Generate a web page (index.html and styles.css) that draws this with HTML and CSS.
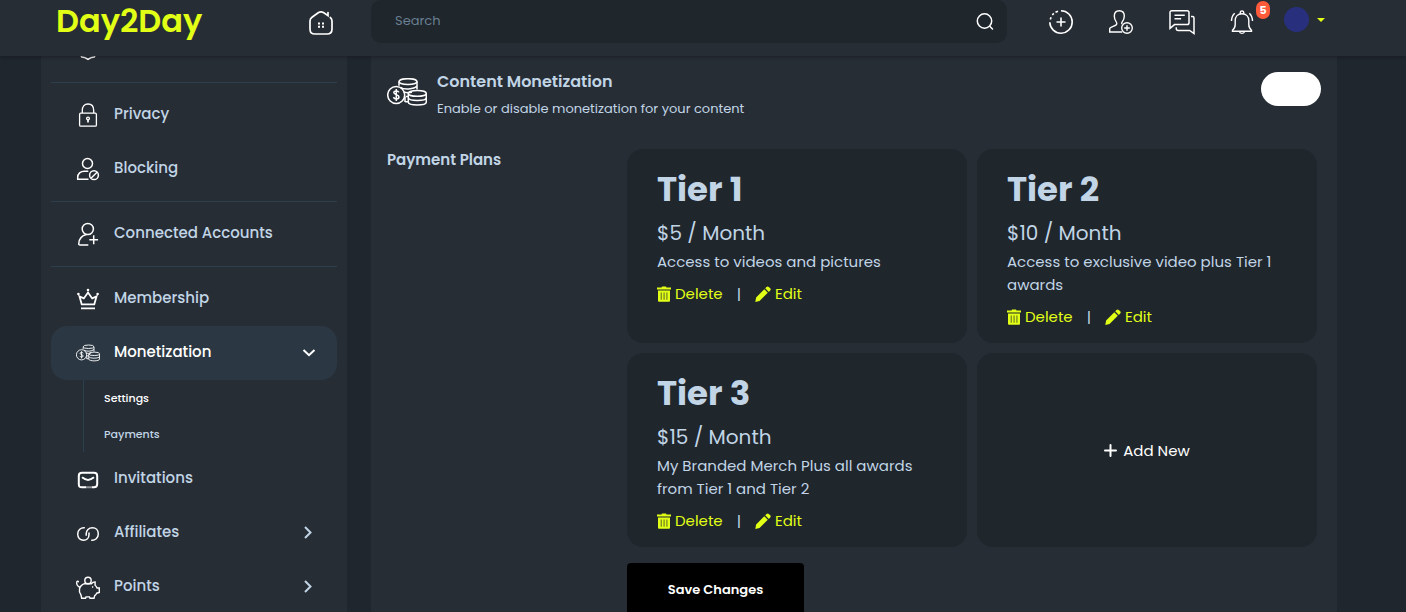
FILE: index.html
```html
<!DOCTYPE html>
<html lang="en">
<head>
<meta charset="utf-8">
<meta name="viewport" content="width=device-width, initial-scale=1">
<title>Day2Day</title>
<link rel="stylesheet" href="styles.css">
</head>
<body>
<svg class="defs" aria-hidden="true">
  <symbol id="coins" viewBox="0 0 40 28">
    <g fill="none" stroke="currentColor">
      <ellipse cx="21" cy="3.6" rx="9" ry="2.9"/>
      <path d="M12 3.6v4.2M30 3.600v8M13.500 9.300c3 2.600 13.500 2.200 16.500-1.200M16.500 14c3 .8 6 .8 8.500.3M18.500 18.600h2.500M18 23.500c1 .3 2 .4 3 .3M18 19v5"/>
      <circle cx="9.200" cy="17" r="8.500"/>
      <path d="M11.800 14.400c-.4-2-5-2-5 .2 0 2.600 5.200 1.600 5.200 4.400 0 2.500-5 2.500-5.400.2M9.300 11v12"/>
      <ellipse cx="30.300" cy="15.400" rx="9" ry="2.900"/>
      <path d="M21.300 15.400v8.700c0 4 18 4 18 0v-8.700M21.300 19.600c0 4 18 4 18 0"/>
    </g>
  </symbol>
  <symbol id="trash" viewBox="0 0 14 16">
    <path fill="currentColor" fill-rule="evenodd" d="M4.500 1.500 5 .5h4l.5 1H14v2H0v-2zM1 4.500h12v10c0 .8-.5 1.300-1.200 1.300H2.200c-.7 0-1.200-.5-1.200-1.300zm2.800 2v7.200h.7V6.500zm2.900 0v7.200h.7V6.500zm2.900 0v7.200h.7V6.500z"/>
  </symbol>
  <symbol id="pencil" viewBox="0 0 16 16">
    <path fill="currentColor" d="m9.300 3.200 3.500 3.500-8.300 8.300L.3 15.900l.8-4.400zM10.200 2.300l1.300-1.400c.7-.7 1.600-.7 2.300 0l1.400 1.400c.7.700.7 1.600 0 2.300l-1.400 1.300z"/>
  </symbol>
</svg>

<header class="topbar">
  <div class="brand">
    <a class="logo" href="#">Day2Day</a>
    <a class="icon-link home" href="#" aria-label="Home">
      <svg class="icon" viewBox="0 0 24 24" fill="none" stroke="currentColor" stroke-width="1.700" stroke-linecap="round">
        <path d="M21.300 7.500c1.200 1 1.700 2 1.700 3.500v8c0 3.500-1.500 5-5 5H6c-3.500 0-5-1.500-5-5v-8c0-1.700.6-2.700 2-3.700l6.200-4.500c1.800-1.200 3.800-1.200 5.600 0L19 5.700V2.500"/>
        <path stroke-linecap="butt" stroke-width="2" d="M9 13.500h2M13 13.500h2M9 16.800h2M13 16.800h2"/>
      </svg>
    </a>
  </div>
  <form class="search" role="search">
    <input class="search-input" type="search" placeholder="Search" aria-label="Search">
    <button class="search-button" type="button" aria-label="Search">
      <svg class="search-icon" viewBox="0 0 18 18" fill="none" stroke="currentColor" stroke-width="1.500" stroke-linecap="round"><circle cx="8.500" cy="8" r="7.200"/><path d="m14 13.500 2.500 2.500"/></svg>
    </button>
  </form>
  <nav class="actions" aria-label="Account">
    <button class="icon-link" type="button" aria-label="Create">
      <svg class="icon" viewBox="0 0 24 24" fill="none" stroke="currentColor" stroke-width="1.600"><path d="M12 .8a11.200 11.200 0 1 1-11.200 11.500M1.300 9.500l.8-2.300M3.300 5l1.500-1.600M6.500 2.300l2.500-1.100M12 7.500v9M7.500 12h9"/></svg>
    </button>
    <button class="icon-link" type="button" aria-label="Add friend">
      <svg class="icon" viewBox="0 0 24 24" fill="none" stroke="currentColor" stroke-width="1.400"><path d="M13.200 22H.7v-3.200c0-2 5.500-2.600 6.800-4.300.6-.9.200-2-.4-2.800C5.800 10 5.300 8 5.300 6c0-3.500 2-5.300 5-5.300s5 1.800 5 5.300c0 2-.6 4-2 5.700-.6.800-.9 1.700-.3 2.500"/><circle cx="18" cy="18" r="5.300"/><path d="M18 15.200v5.600M15.200 18h5.600"/></svg>
    </button>
    <button class="icon-link" type="button" aria-label="Messages">
      <svg class="icon icon-wide" viewBox="0 0 26 24" fill="none" stroke="currentColor" stroke-width="1.500"><path d="M1 18.300V2.500C1 1.400 1.700.7 2.800.7h15.400c1.100 0 1.800.7 1.800 1.800v10.300c0 1.100-.7 1.800-1.800 1.800H5.500zM5.500 5.200h10.300M5.500 8.800h6.600"/><path d="M22 6.500h1.500c1 0 1.500.6 1.500 1.500v15.500l-4.300-3H9.200c-1.200 0-1.900-.7-1.900-1.700v-1.500"/></svg>
    </button>
    <button class="icon-link bell" type="button" aria-label="Notifications">
      <svg class="icon" viewBox="0 0 24 24" fill="none" stroke="currentColor" stroke-width="1.400"><path d="M2.500 21.200v-1c2-1.500 2.700-3 2.700-5.700v-4c0-4 2.700-6.700 6.800-6.700s6.800 2.700 6.800 6.700v4c0 2.700.7 4.200 2.700 5.700v1zM9.400 21.500c.4 2.500 4.800 2.500 5.200 0M10.300 3.500c-.5-3.500 3.900-3.500 3.400 0M4.700 3.200C2.700 5 1.600 7.700 1.500 11M19.300 3.200c2 1.800 3.100 4.500 3.200 7.800"/></svg>
      <span class="badge">5</span>
    </button>
    <button class="account" type="button" aria-label="Account menu"><span class="avatar"></span><span class="caret"></span></button>
  </nav>
</header>

<div class="layout">
  <aside class="sidebar">
    <div class="scrolled">
      <a class="nav-item" href="#" aria-label="General">
        <svg class="icon" viewBox="0 0 24 24" fill="none" stroke="currentColor" stroke-width="1.500"><path d="m12 1 3 1.500 3.500.5 1 3.500L22 9l-1 3 1 3-2.500 2.500-1.300 2.500c-1 .3-2.200 0-3.200.7L12 22.500l-3-1.800c-1-.7-2.200-.4-3.200-.7l-1.300-2.500L2 15l1-3-1-3 2.500-2.500 1-3.500L9 2.500z"/><circle cx="12" cy="12" r="4"/></svg>
      </a>
    </div>
    <nav class="group">
      <a class="nav-item" href="#">
        <svg class="icon" viewBox="0 0 24 24" fill="none" stroke="currentColor" stroke-width="1.300"><rect x="3.600" y="10.200" width="16.800" height="13" rx="1.200"/><path d="M6.300 10V7.500C6.300 3.500 8.500 1 12 1s5.700 2.500 5.700 6.500V10"/><circle cx="12" cy="15.500" r="1.400"/><path stroke-width="1.700" d="M12 16.500v3"/></svg>
        <span class="nav-label">Privacy</span>
      </a>
      <a class="nav-item" href="#">
        <svg class="icon" viewBox="0 0 24 24" fill="none" stroke="currentColor" stroke-width="1.500"><circle cx="11.500" cy="6.500" r="5"/><path d="M12.500 22.200H1.700v-1.700c0-4 2.800-6.300 6.800-6.300h3.800"/><circle cx="18" cy="18.200" r="4.400"/><path d="m15 21.200 6-6"/></svg>
        <span class="nav-label">Blocking</span>
      </a>
    </nav>
    <nav class="group">
      <a class="nav-item" href="#">
        <svg class="icon" viewBox="0 0 24 24" fill="none" stroke="currentColor" stroke-width="1.500"><circle cx="11.800" cy="7" r="5.600"/><path d="M12.300 23H4c-1 0-1.300-.6-1.200-1.500.3-5 3.500-8 7.700-9M17.700 13.200v9M13.300 17.700h8.800"/></svg>
        <span class="nav-label">Connected Accounts</span>
      </a>
    </nav>
    <nav class="group">
      <a class="nav-item" href="#">
        <svg class="icon" viewBox="0 0 24 24" fill="none" stroke="currentColor" stroke-width="1.800"><path d="M5.700 17.300 3.500 9.400l4.300 2L12 5.500l4.200 5.900 4.300-2-2.200 7.900zM5 21.400h14"/><g fill="currentColor" stroke="none"><circle cx="12" cy="3" r="1.300"/><circle cx="2.400" cy="7" r="1.300"/><circle cx="21.600" cy="7" r="1.300"/></g></svg>
        <span class="nav-label">Membership</span>
      </a>
      <a class="nav-item active" href="#">
        <svg class="icon" stroke-width="1.500"><use href="#coins"/></svg>
        <span class="nav-label">Monetization</span>
        <svg class="chevron" viewBox="0 0 14 14" fill="none" stroke="currentColor" stroke-width="2"><path d="m1.500 4 5.500 5.200L12.500 4"/></svg>
      </a>
      <div class="subnav">
        <a class="sub-item current" href="#">Settings</a>
        <a class="sub-item" href="#">Payments</a>
      </div>
      <a class="nav-item" href="#">
        <svg class="icon" viewBox="0 0 24 24" fill="none" stroke="currentColor" stroke-width="2"><path d="M10.500 20.300H6c-2.500 0-3.200-.8-3.200-3.200V9c0-2.400.8-3.200 3.200-3.200h12c2.400 0 3.200.8 3.200 3.200v8.100c0 2.400-.7 3.200-3.200 3.200h-2.500M11.500 20.300h1M13.500 20.300h1M6 10.300c4.500 3.500 7.500 3.500 12 0"/></svg>
        <span class="nav-label">Invitations</span>
      </a>
      <a class="nav-item" href="#">
        <svg class="icon" viewBox="0 0 24 24" fill="none" stroke="currentColor" stroke-width="1.500"><path d="M8.800 6.800C4.800 6.300 1.700 9 1.700 13s2.700 6.200 5.800 6.200c3.200 0 5.500-2.200 5.500-5.700v-2M15.200 19.200c4 .5 7.100-2.200 7.100-6.200s-2.700-6.200-5.800-6.200c-3.800 0-6.300 2.500-6.300 6v2"/></svg>
        <span class="nav-label">Affiliates</span>
        <svg class="chevron" viewBox="0 0 14 14" fill="none" stroke="currentColor" stroke-width="2"><path d="m3 1 5.500 5.500L3 12"/></svg>
      </a>
      <a class="nav-item" href="#">
        <svg class="icon" viewBox="0 0 24 24" fill="none" stroke="currentColor" stroke-width="1.400"><path d="M8.500 8.700h6.800c1-1.300 2.200-1.800 3.800-1.800v3.300c1 .8 1.600 1.700 2 2.800h2.200v4.500l-2.600.7c-.5 1-1.200 1.800-2 2.400L18 23.200h-4l-.5-1.300H10l-.5 1.300H5.700L5 20c-2.800-3.500-2.300-9 3.500-11.300zM3.500 12C1.500 11 .3 9.300.8 7c.3-1.400 2-.9 1.400.3"/><circle cx="12" cy="5.500" r="3.200"/><path d="M16 12h1.200"/></svg>
        <span class="nav-label">Points</span>
        <svg class="chevron" viewBox="0 0 14 14" fill="none" stroke="currentColor" stroke-width="2"><path d="m3 1 5.500 5.500L3 12"/></svg>
      </a>
    </nav>
  </aside>

  <main class="content">
    <section class="setting">
      <svg class="setting-icon" stroke-width="1.500"><use href="#coins"/></svg>
      <label class="setting-text" for="monetize">
        <span class="setting-title">Content Monetization</span>
        <span class="setting-note">Enable or disable monetization for your content</span>
      </label>
      <input class="toggle" type="checkbox" id="monetize">
    </section>
    <section class="plans">
      <h2 class="plans-title">Payment Plans</h2>
      <div class="plans-body">
        <div class="plan-grid">
          <article class="plan">
            <h3 class="plan-name">Tier 1</h3>
            <p class="plan-price">$5 / Month</p>
            <p class="plan-note">Access to videos and pictures</p>
            <div class="plan-actions"><button class="plan-action" type="button"><svg class="trash"><use href="#trash"/></svg>Delete</button><span class="bar">|</span><button class="plan-action" type="button"><svg class="pencil"><use href="#pencil"/></svg>Edit</button></div>
          </article>
          <article class="plan">
            <h3 class="plan-name">Tier 2</h3>
            <p class="plan-price">$10 / Month</p>
            <p class="plan-note">Access to exclusive video plus Tier 1 awards</p>
            <div class="plan-actions"><button class="plan-action" type="button"><svg class="trash"><use href="#trash"/></svg>Delete</button><span class="bar">|</span><button class="plan-action" type="button"><svg class="pencil"><use href="#pencil"/></svg>Edit</button></div>
          </article>
          <article class="plan">
            <h3 class="plan-name">Tier 3</h3>
            <p class="plan-price">$15 / Month</p>
            <p class="plan-note">My Branded Merch Plus all awards from Tier 1 and Tier 2</p>
            <div class="plan-actions"><button class="plan-action" type="button"><svg class="trash"><use href="#trash"/></svg>Delete</button><span class="bar">|</span><button class="plan-action" type="button"><svg class="pencil"><use href="#pencil"/></svg>Edit</button></div>
          </article>
          <button class="plan plan-add" type="button"><svg class="plus" viewBox="0 0 13 13" stroke="currentColor" stroke-width="2" stroke-linecap="round"><path d="M6.500 1v11M1 6.500h11"/></svg>Add New</button>
        </div>
        <button class="save" type="button">Save Changes</button>
      </div>
    </section>
  </main>
</div>
</body>
</html>
```

FILE: styles.css
```css
:root {
  --page: #1f262d;
  --panel: #272d35;
  --well: #1f262c;
  --active: #2b3742;
  --line: #2c3f4d;
  --text: #c1d5e6;
  --accent: #e2ff16;
}

* { box-sizing: border-box; }

body {
  display: flex;
  flex-direction: column;
  height: 100vh;
  margin: 0;
  overflow: hidden;
  background: var(--page);
  color: var(--text);
  font-family: Poppins, Inter, "Open Sans", sans-serif;
  font-size: 15px;
}

a { color: inherit; text-decoration: none; }
h2, h3, p { margin: 0; }
button {
  padding: 0;
  border: 0;
  background: none;
  color: inherit;
  font: inherit;
  cursor: pointer;
}
svg { display: block; flex: none; }
.defs { position: absolute; width: 0; height: 0; }
.icon { width: 24px; height: 24px; color: #fff; overflow: visible; }

/* Top bar */
.topbar {
  display: flex;
  flex: none;
  height: 56px;
  padding: 0 81px 12px 56px;
  background: var(--panel);
  box-shadow: 0 1px 3px rgba(20, 20, 28, 0.5);
  z-index: 1;
}
.brand {
  display: flex;
  flex: none;
  align-items: center;
  justify-content: space-between;
  width: 315px;
  padding-right: 38px;
}
.logo {
  padding-bottom: 2px;
  color: var(--accent);
  font-size: 32px;
  font-weight: 600;
  line-height: 40px;
}
.icon-link { display: flex; align-items: center; }
.search {
  display: flex;
  flex: 1;
  height: 43px;
  margin: 0;
  border-radius: 10px;
  background: var(--well);
}
.search-input {
  flex: 1;
  min-width: 0;
  padding: 0 24px 2px;
  border: 0;
  background: none;
  color: var(--text);
  font: inherit;
  font-size: 13px;
}
.search-input::placeholder { color: #697f92; }
.search-button { padding: 0 13px 0 11px; color: #fff; }
.search-icon { width: 18px; height: 18px; }
.actions {
  display: flex;
  flex: none;
  gap: 36px;
  padding-left: 42px;
}
.icon-wide { width: 26px; margin-right: -1px; }
.bell { position: relative; }
.badge {
  position: absolute;
  top: 1px;
  left: 26px;
  width: 14px;
  border-radius: 7px;
  background: #ff5b3a;
  color: #fff;
  font-size: 11px;
  font-weight: 700;
  line-height: 18px;
  text-align: center;
}
.account {
  display: flex;
  align-items: center;
  gap: 8px;
  margin-left: -6px;
  padding-bottom: 5px;
}
.avatar {
  width: 25px;
  height: 25px;
  border-radius: 50%;
  background: #28307e;
}
.caret {
  border: 4px solid transparent;
  border-top-color: var(--accent);
  border-bottom: 0;
}

/* Page columns */
.layout {
  display: grid;
  flex: 1;
  grid-template-columns: 306px 1fr;
  gap: 24px;
  min-height: 0;
  padding: 0 69px 0 41px;
}
.sidebar, .content {
  overflow: hidden;
  background: var(--panel);
}
.sidebar { padding: 0 10px; }

/* Side menu */
.scrolled {
  display: flex;
  align-items: flex-end;
  height: 26px;
  padding-bottom: 6px;
  overflow: hidden;
}
.group {
  padding: 5px 0;
  border-top: 1px solid var(--line);
}
.nav-item {
  display: flex;
  align-items: center;
  gap: 14px;
  height: 54px;
  padding: 0 21px 0 25px;
  border-radius: 16px;
  font-weight: 500;
}
.nav-label { padding-bottom: 3px; }
.active {
  background: var(--active);
  color: #fff;
}
.chevron { width: 14px; height: 14px; margin-left: auto; }
.subnav {
  display: flex;
  flex-direction: column;
  margin-left: 32px;
  padding-left: 20px;
  border-left: 1px solid var(--line);
}
.sub-item {
  font-size: 11px;
  font-weight: 500;
  line-height: 36px;
}
.current { color: #fff; }

/* Monetization settings */
.content { padding: 16px; }
.setting {
  display: flex;
  gap: 10px;
  align-items: flex-start;
}
.setting-icon {
  width: 40px;
  height: 28px;
  margin-top: 6px;
  color: #fff;
}
.setting-text { flex: 1; }
.setting-title, .setting-note { display: block; }
.setting-title {
  font-size: 16px;
  font-weight: 600;
  line-height: 20px;
}
.setting-note {
  padding-top: 6px;
  font-size: 13px;
  line-height: 21px;
}
.toggle {
  width: 60px;
  height: 34px;
  margin: 0;
  border-radius: 17px;
  background: #fff;
  appearance: none;
}
.plans {
  display: flex;
  padding: 30px 4px 0 0;
}
.plans-title {
  flex: none;
  width: 240px;
  font-size: 15px;
  font-weight: 600;
  line-height: 22px;
}
.plans-body { flex: 1; }
.plan-grid {
  display: grid;
  grid-template-columns: 1fr 1fr;
  gap: 10px;
}
.plan {
  min-height: 194px;
  padding: 18px 30px 14px;
  border-radius: 16px;
  background: var(--well);
}
.plan-name {
  font-size: 34px;
  font-weight: 700;
  line-height: 44px;
}
.plan-price {
  padding-top: 7px;
  font-size: 20px;
  line-height: 30px;
}
.plan-note { padding-top: 2px; line-height: 23px; }
.plan-actions {
  display: flex;
  align-items: center;
  gap: 14px;
  padding-top: 10px;
  line-height: 22px;
}
.plan-action {
  display: flex;
  align-items: center;
  gap: 4px;
  color: var(--accent);
}
.trash { width: 14px; height: 16px; }
.pencil { width: 16px; height: 16px; }
.plan-add {
  display: flex;
  align-items: center;
  justify-content: center;
  gap: 6px;
  padding: 0;
  color: #fff;
}
.plus { width: 13px; height: 13px; }
.save {
  width: 177px;
  height: 53px;
  margin-top: 16px;
  border-radius: 4px;
  background: #000;
  color: #fff;
  font-size: 13px;
  font-weight: 600;
}
```
